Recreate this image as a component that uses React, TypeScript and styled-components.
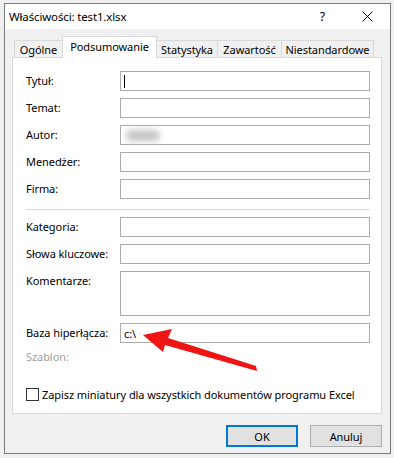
import React from 'react';
import styled, { createGlobalStyle } from 'styled-components';

const GlobalStyle = createGlobalStyle`
  html, body {
    margin: 0;
    padding: 0;
    background: #f0f0f0;
  }
  body {
    font-family: 'Noto Sans', 'Liberation Sans', sans-serif;
    font-size: 11px;
    letter-spacing: -0.07px;
    color: #000;
  }
  * {
    box-sizing: border-box;
  }
`;

const Page = styled.div`
  position: relative;
  width: 394px;
  height: 458px;
  padding: 3px 0 0 4px;
  overflow: hidden;
`;

const Dialog = styled.div`
  width: 387px;
  height: 451px;
  border: 1px solid #7a7a7a;
  background: #f0f0f0;
  display: flex;
  flex-direction: column;
`;

const TitleBar = styled.div`
  height: 25px;
  background: #fff;
  display: flex;
  align-items: center;
  padding-left: 4px;
`;

const Title = styled.div`
  flex: 1;
  font-size: 11.5px;
  letter-spacing: -0.15px;
`;

const TitleButton = styled.div`
  width: 45px;
  height: 25px;
  display: flex;
  align-items: center;
  justify-content: center;
  font-size: 12.5px;
`;

const Body = styled.div`
  flex: 1;
  display: flex;
  flex-direction: column;
  padding: 7px 8px 6px 7px;
`;

const TabRow = styled.div`
  display: flex;
  align-items: flex-end;
  height: 21px;
  padding-left: 3px;
`;

const Tab = styled.div<{ $active?: boolean; $w: number }>`
  position: relative;
  z-index: ${(p) => (p.$active ? 1 : 0)};
  width: ${(p) => p.$w}px;
  height: ${(p) => (p.$active ? 22 : 17)}px;
  margin-bottom: ${(p) => (p.$active ? -1 : 0)}px;
  margin-left: -1px;
  background: ${(p) => (p.$active ? '#fff' : '#f0f0f0')};
  border: 1px solid #d9d9d9;
  border-bottom: none;
  display: flex;
  align-items: center;
  justify-content: center;
  padding-bottom: ${(p) => (p.$active ? 3 : 0)}px;
  white-space: nowrap;
`;

const Panel = styled.div`
  height: 357px;
  background: #fff;
  border: 1px solid #d9d9d9;
  padding: 13px 11px 0 13px;
`;

const FieldGrid = styled.div`
  display: grid;
  grid-template-columns: 94px 250px;
  row-gap: 7px;
`;

const Label = styled.div<{ $disabled?: boolean }>`
  line-height: ${(p) => (p.$disabled ? 14 : 20)}px;
  color: ${(p) => (p.$disabled ? '#a0a0a0' : '#000')};
  white-space: nowrap;
`;

const Field = styled.div<{ $h?: number }>`
  height: ${(p) => p.$h || 20}px;
  border: 1px solid #ababab;
  background: #fff;
  display: flex;
  align-items: center;
  padding-left: 3px;
`;

const Caret = styled.span`
  display: block;
  width: 1px;
  height: 13px;
  background: #000;
`;

const Blur = styled.span`
  display: block;
  width: 34px;
  height: 11px;
  margin-left: 2px;
  border-radius: 6px;
  background: #c4c4c4;
  filter: blur(3px);
`;

const Separator = styled.div`
  grid-column: 1 / -1;
  height: 1px;
  margin-top: 3px;
  background: #dadada;
`;

const CheckRow = styled.label`
  margin-top: 24px;
  display: flex;
  align-items: center;
  gap: 3px;
  height: 13px;
  white-space: nowrap;
`;

const CheckBox = styled.span`
  flex-shrink: 0;
  width: 13px;
  height: 13px;
  border: 1px solid #333;
  background: #fff;
`;

const ButtonRow = styled.div`
  margin-top: 11px;
  display: flex;
  justify-content: flex-end;
  gap: 12px;
`;

const Button = styled.div<{ $primary?: boolean }>`
  width: 72px;
  height: 22px;
  background: #e1e1e1;
  border: ${(p) => (p.$primary ? '2px solid #0078d7' : '1px solid #adadad')};
  display: flex;
  align-items: center;
  justify-content: center;
`;

const Arrow = styled.svg`
  position: absolute;
  left: 0;
  top: 0;
  pointer-events: none;
`;

const tabs = [
  { label: 'Ogólne', w: 49 },
  { label: 'Podsumowanie', w: 95, active: true },
  { label: 'Statystyka', w: 62 },
  { label: 'Zawartość', w: 65 },
  { label: 'Niestandardowe', w: 93 },
];

export default function App() {
  return (
    <>
      <GlobalStyle />
      <Page>
        <Dialog>
          <TitleBar>
            <Title>Właściwości: test1.xlsx</Title>
            <TitleButton>?</TitleButton>
            <TitleButton>
              <svg width="11" height="11" viewBox="0 0 11 11">
                <path d="M0.5 0.5 L10.5 10.5 M10.5 0.5 L0.5 10.5" stroke="#000" strokeWidth="1" />
              </svg>
            </TitleButton>
          </TitleBar>
          <Body>
            <TabRow>
              {tabs.map((t) => (
                <Tab key={t.label} $w={t.w} $active={t.active}>
                  {t.label}
                </Tab>
              ))}
            </TabRow>
            <Panel>
              <FieldGrid>
                <Label>Tytuł:</Label>
                <Field>
                  <Caret />
                </Field>
                <Label>Temat:</Label>
                <Field />
                <Label>Autor:</Label>
                <Field>
                  <Blur />
                </Field>
                <Label>Menedżer:</Label>
                <Field />
                <Label>Firma:</Label>
                <Field />
                <Separator />
                <Label>Kategoria:</Label>
                <Field />
                <Label>Słowa kluczowe:</Label>
                <Field />
                <Label>Komentarze:</Label>
                <Field $h={45} />
                <Label>Baza hiperłącza:</Label>
                <Field>c:\</Field>
                <Label $disabled>Szablon:</Label>
                <div />
              </FieldGrid>
              <CheckRow>
                <CheckBox />
                Zapisz miniatury dla wszystkich dokumentów programu Excel
              </CheckRow>
            </Panel>
            <ButtonRow>
              <Button $primary>OK</Button>
              <Button>Anuluj</Button>
            </ButtonRow>
          </Body>
        </Dialog>
        <Arrow width="394" height="458" viewBox="0 0 394 458">
          <polygon
            points="143,335 172,329 168,338 256,366 257,371 165,345 163,352"
            fill="#f01515"
          />
        </Arrow>
      </Page>
    </>
  );
}
